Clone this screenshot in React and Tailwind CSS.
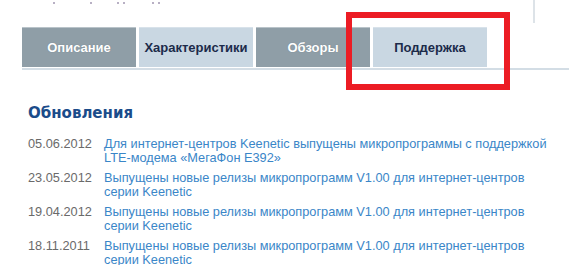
import React from "react";

const tabs = [
  { label: "Описание", active: false },
  { label: "Характеристики", active: true },
  { label: "Обзоры", active: false },
  { label: "Поддержка", active: true },
];

const updates = [
  {
    date: "05.06.2012",
    title: "Для интернет-центров Keenetic выпущены микропрограммы с поддержкой LTE-модема «МегаФон E392»",
  },
  {
    date: "23.05.2012",
    title: "Выпущены новые релизы микропрограмм V1.00 для интернет-центров серии Keenetic",
  },
  {
    date: "19.04.2012",
    title: "Выпущены новые релизы микропрограмм V1.00 для интернет-центров серии Keenetic",
  },
  {
    date: "18.11.2011",
    title: "Выпущены новые релизы микропрограмм V1.00 для интернет-центров серии Keenetic",
  },
];

const App = () => {
  return (
    <div className="relative w-[569px] h-[265px] overflow-hidden bg-white font-['Liberation_Sans',Arial,sans-serif]">
      {/* cut-off text remnants at the top */}
      <div className="h-[27px] relative">
        <div className="flex items-start pt-[2px] pl-[53px]">
          <span className="w-[2px] h-[2px] bg-[#b8b0c4]"></span>
          <span className="w-[2px] h-[2px] bg-[#b8b0c4] ml-[35px]"></span>
          <span className="w-[2px] h-[2px] bg-[#b8b0c4] ml-[25px]"></span>
          <span className="w-[2px] h-[2px] bg-[#b8b0c4] ml-[4px]"></span>
          <span className="w-[2px] h-[2px] bg-[#b8b0c4] ml-[27px]"></span>
          <span className="w-[2px] h-[2px] bg-[#b8b0c4] ml-[4px]"></span>
        </div>
        <div className="absolute left-[533px] top-0 w-[2px] h-[23px] bg-[#dde3e8]"></div>
      </div>

      {/* Tabs */}
      <div className="ml-[22px] flex gap-[3px]">
        {tabs.map((tab) => (
          <div
            key={tab.label}
            className={
              tab.active
                ? "w-[114px] h-[40px] flex items-center justify-center bg-[#c9d7e2] border-t border-[#d8e2ea] text-[#1c2b4a] text-[13px] font-bold"
                : "w-[114px] h-[40px] flex items-center justify-center bg-[#8f9ea7] border-t border-[#b9c3c9] text-white text-[13px] font-bold [text-shadow:0_0_1px_#6b7a84]"
            }
          >
            {tab.label}
          </div>
        ))}
      </div>
      <div className="ml-[22px] mt-[1px] h-[2px] bg-[#d3dde5]"></div>

      {/* Updates */}
      <div className="pl-[28px] mt-[34px]">
        <h2 className="text-[15px] leading-[18px] font-bold text-[#1b4c8a] font-['DejaVu_Sans',Verdana,sans-serif]">
          Обновления
        </h2>
        <div className="mt-[15px] flex flex-col gap-[6px]">
          {updates.map((item, idx) => (
            <div key={idx} className="flex text-[12.75px] leading-[14px]">
              <div className="w-[76px] shrink-0 text-[#6a6a6a]">{item.date}</div>
              <a href="#" className="w-[450px] text-[#3a86c8]">
                {item.title}
              </a>
            </div>
          ))}
        </div>
      </div>

      {/* red highlight annotation */}
      <div className="absolute left-[346px] top-[12px] w-[164px] h-[78px] border-[6px] border-[#ec1c24]"></div>
    </div>
  );
};

export default App;
